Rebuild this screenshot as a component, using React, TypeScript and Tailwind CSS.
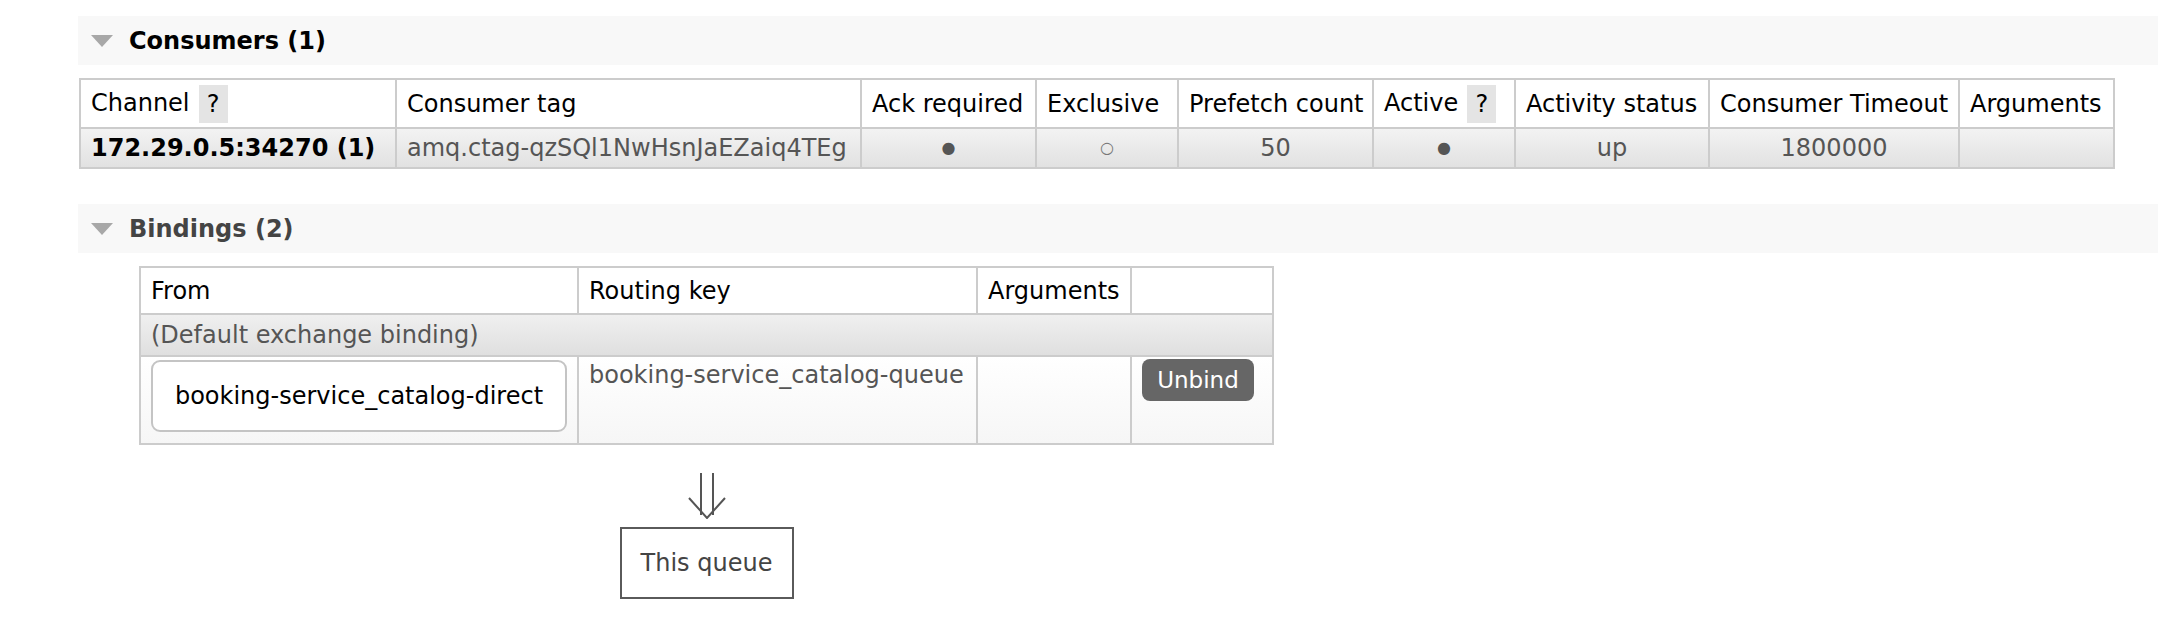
import React from "react";

const font = { fontFamily: '"DejaVu Sans", Verdana, sans-serif' };

function Triangle() {
  return (
    <svg width="22" height="12" viewBox="0 0 22 12" className="shrink-0">
      <polygon points="0,0 22,0 11,12" fill="#a8a8a8" />
    </svg>
  );
}

function SectionHeader({ title, dark }: { title: string; dark?: boolean }) {
  return (
    <div className="flex h-[49px] items-center bg-[#f8f8f8] pl-[13px]">
      <Triangle />
      <span className={`ml-[16px] text-[24px] font-bold leading-none ${dark ? "text-black" : "text-[#444]"}`}>{title}</span>
    </div>
  );
}

function Help() {
  return (
    <span className="ml-[9px] inline-flex h-[38px] w-[29px] items-center justify-center bg-[#e4e4e4] align-middle">?</span>
  );
}

const cell = "border-2 border-[#ccc] px-[10px]";

export default function App() {
  const consumerCols = [316, 465, 175, 142, 195, 142, 194, 250, 155];
  const bindingCols = [438, 399, 154, 142];
  return (
    <div className="min-h-[636px] w-[2158px] bg-white pl-[78px] pt-[16px] text-[24px] text-black" style={font}>
      <SectionHeader title="Consumers (1)" dark />
      <table className="mt-[13px] ml-[1px] table-fixed border-collapse w-[2034px]">
        <colgroup>
          {consumerCols.map((w, i) => (
            <col key={i} style={{ width: w }} />
          ))}
        </colgroup>
        <thead>
          <tr className="h-[49px] bg-white text-left leading-[28px]">
            <th className={`${cell} font-normal whitespace-nowrap`}>
              Channel<Help />
            </th>
            <th className={`${cell} font-normal whitespace-nowrap`}>Consumer tag</th>
            <th className={`${cell} font-normal whitespace-nowrap`}>Ack required</th>
            <th className={`${cell} font-normal whitespace-nowrap`}>Exclusive</th>
            <th className={`${cell} font-normal whitespace-nowrap`}>Prefetch count</th>
            <th className={`${cell} font-normal whitespace-nowrap`}>
              Active<Help />
            </th>
            <th className={`${cell} font-normal whitespace-nowrap`}>Activity status</th>
            <th className={`${cell} font-normal whitespace-nowrap`}>Consumer Timeout</th>
            <th className={`${cell} font-normal whitespace-nowrap`}>Arguments</th>
          </tr>
        </thead>
        <tbody>
          <tr className="h-[40px] bg-gradient-to-b from-[#f3f3f3] to-[#e1e1e1] leading-[28px] text-[#555]">
            <td className={`${cell} font-bold text-black whitespace-nowrap`}>172.29.0.5:34270 (1)</td>
            <td className={`${cell} whitespace-nowrap`}>amq.ctag-qzSQl1NwHsnJaEZaiq4TEg</td>
            <td className={`${cell} text-center text-[16px]`}>●</td>
            <td className={`${cell} text-center text-[16px] text-[#777]`}>○</td>
            <td className={`${cell} text-center`}>50</td>
            <td className={`${cell} text-center text-[16px]`}>●</td>
            <td className={`${cell} text-center`}>up</td>
            <td className={`${cell} text-center`}>1800000</td>
            <td className={cell}></td>
          </tr>
        </tbody>
      </table>

      <div className="mt-[35px]">
        <SectionHeader title="Bindings (2)" />
      </div>

      <div className="ml-[62px] mt-[13px] flex w-[1133px] flex-col items-center">
        <table className="table-fixed border-collapse w-[1133px]">
          <colgroup>
            {bindingCols.map((w, i) => (
              <col key={i} style={{ width: w }} />
            ))}
          </colgroup>
          <thead>
            <tr className="h-[47px] bg-white text-left leading-[28px]">
              <th className={`${cell} font-normal`}>From</th>
              <th className={`${cell} font-normal`}>Routing key</th>
              <th className={`${cell} font-normal`}>Arguments</th>
              <th className={`${cell} font-normal`}></th>
            </tr>
          </thead>
          <tbody>
            <tr className="h-[42px] bg-gradient-to-b from-[#f0f0f0] to-[#dfdfdf] leading-[28px] text-[#555]">
              <td className={cell} colSpan={4}>(Default exchange binding)</td>
            </tr>
            <tr className="h-[88px] bg-gradient-to-b from-[#ffffff] to-[#f6f6f6] align-top leading-[28px]">
              <td className={`${cell} pt-[3px]`}>
                <div className="flex h-[72px] w-[416px] items-center justify-center rounded-[9px] border-2 border-[#c4c4c4] bg-white text-black whitespace-nowrap">
                  booking-service_catalog-direct
                </div>
              </td>
              <td className={`${cell} pt-[4px] text-[#555] whitespace-nowrap`}>booking-service_catalog-queue</td>
              <td className={cell}></td>
              <td className={`${cell} pt-[2px]`}>
                <button className="flex h-[42px] w-[112px] items-center justify-center rounded-[8px] bg-[#666] text-[23px] text-white">
                  Unbind
                </button>
              </td>
            </tr>
          </tbody>
        </table>

        <svg width="40" height="48" viewBox="0 0 40 48" className="mt-[26px]">
          <g stroke="#555" strokeWidth="2" fill="none">
            <line x1="14" y1="2" x2="14" y2="44" />
            <line x1="26" y1="2" x2="26" y2="44" />
            <polyline points="2,27 20,47 38,27" />
          </g>
        </svg>

        <div className="mt-[8px] flex h-[72px] w-[174px] items-center justify-center border-2 border-[#5a5a5a] text-[#444]">
          This queue
        </div>
      </div>
    </div>
  );
}
